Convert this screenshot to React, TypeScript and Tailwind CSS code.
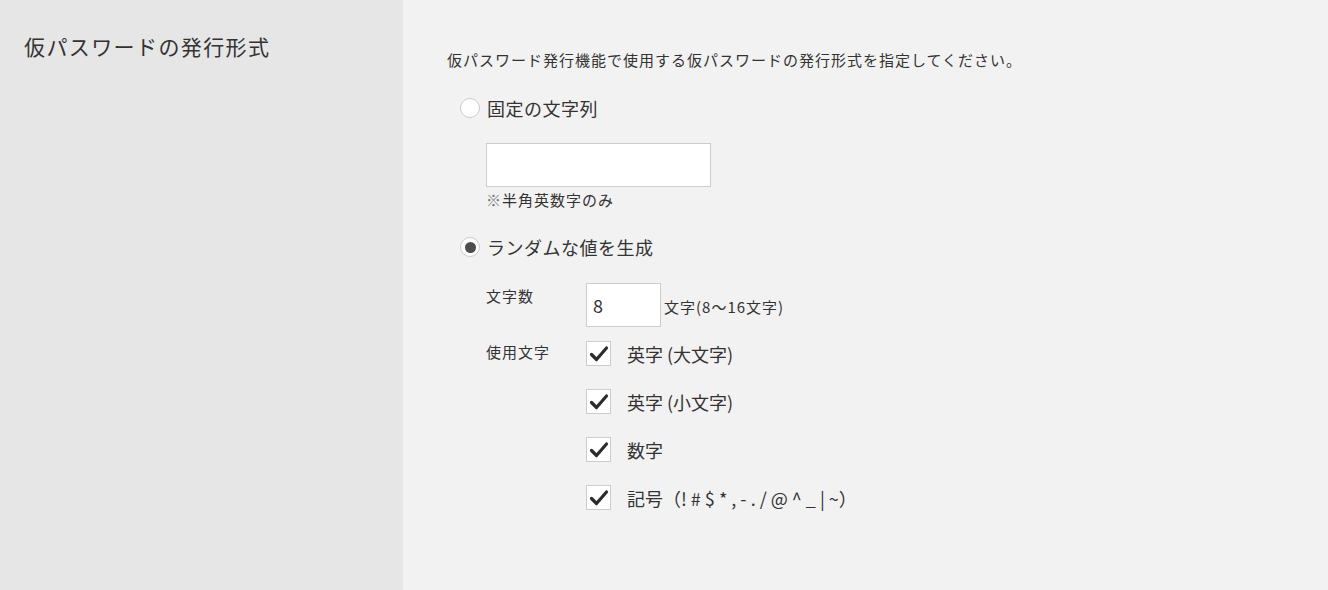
import React from "react";

const font = { fontFamily: '"Noto Sans CJK JP", "Noto Sans", sans-serif' };

function Radio({ checked, label }: { checked?: boolean; label: string }) {
  return (
    <div className="flex items-center h-[24px]">
      <span className="w-[20px] h-[20px] rounded-full border border-[#cccccc] bg-white flex items-center justify-center shrink-0">
        {checked && <span className="w-[11px] h-[11px] rounded-full bg-[#4d4d4d]" />}
      </span>
      <span className="ml-[7px] text-[18px] tracking-[0.5px] text-[#333333] leading-[24px]">{label}</span>
    </div>
  );
}

function Check({ label }: { label: string }) {
  return (
    <div className="flex items-center h-[25px]">
      <span className="w-[25px] h-[25px] border border-[#cccccc] bg-white flex items-center justify-center shrink-0">
        <svg width="20" height="18" viewBox="0 0 20 18">
          <path d="M2.5 9.5 L7.5 14.5 L17.5 3" fill="none" stroke="#2b2b2b" strokeWidth="3.2" strokeLinecap="round" strokeLinejoin="round" />
        </svg>
      </span>
      <span className="ml-[16px] text-[18px] text-[#333333] leading-[24px] whitespace-pre">{label}</span>
    </div>
  );
}

export default function App() {
  return (
    <div className="flex w-[1328px] h-[590px] bg-[#f2f2f2]" style={font}>
      <div className="w-[403px] shrink-0 bg-[#e6e6e6] pl-[24px] pt-[31px]">
        <h2 className="text-[21px] tracking-[1.4px] leading-[30px] text-[#333333] font-normal">仮パスワードの発行形式</h2>
      </div>
      <div className="flex-1 pl-[44px] pt-[50px]">
        <p className="text-[15px] tracking-[1px] leading-[20px] text-[#333333]">
          仮パスワード発行機能で使用する仮パスワードの発行形式を指定してください。
        </p>
        <div className="mt-[26px] pl-[13px]">
          <Radio label="固定の文字列" />
        </div>
        <div className="pl-[39px] mt-[23px]">
          <div className="w-[225px] h-[44px] bg-white border border-[#cccccc]" />
          <p className="mt-[3px] text-[15px] tracking-[1px] leading-[20px] text-[#333333]">
            <span className="text-[#777777]">※</span>半角英数字のみ
          </p>
        </div>
        <div className="mt-[25px] pl-[13px]">
          <Radio checked label="ランダムな値を生成" />
        </div>
        <div className="pl-[39px] mt-[24px] flex flex-col">
          <div className="flex items-start">
            <span className="w-[100px] text-[15px] tracking-[1px] leading-[20px] text-[#333333] pt-[3px]">文字数</span>
            <div className="w-[75px] h-[44px] bg-white border border-[#cccccc] flex items-center pl-[6px] text-[18px] text-[#333333]">8</div>
            <span className="ml-[3px] mt-[14px] text-[15px] tracking-[1px] leading-[20px] text-[#333333]">文字(8〜16文字)</span>
          </div>
          <div className="flex items-start mt-[14px]">
            <span className="w-[100px] text-[15px] tracking-[1px] leading-[20px] text-[#333333] pt-[1px]">使用文字</span>
            <div className="flex flex-col gap-[23px]">
              <Check label="英字 (大文字)" />
              <Check label="英字 (小文字)" />
              <Check label="数字" />
              <Check label="記号（! # $ * , - . / @ ^ _ | ~）" />
            </div>
          </div>
        </div>
      </div>
    </div>
  );
}
